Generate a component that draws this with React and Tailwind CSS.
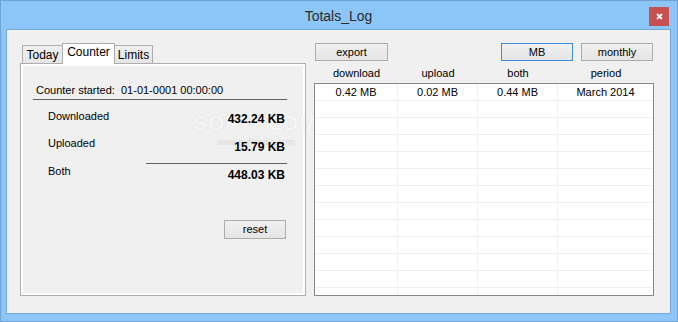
import React from 'react';

const font = { fontFamily: '"Liberation Sans", Arial, sans-serif' };

function WinButton({ children, className = '', active = false }) {
  return (
    <button
      type="button"
      className={`flex items-center justify-center border bg-linear-to-b from-[#f0f0f0] to-[#e5e5e5] text-[11px] leading-none text-black ${
        active ? 'border-[#3c8fe0]' : 'border-[#acacac]'
      } ${className}`}
    >
      {children}
    </button>
  );
}

function CounterPanel() {
  return (
    <div className="flex w-[286px] flex-col">
      <div className="flex h-[20px] items-end pl-[2px]">
        <div className="flex h-[18px] w-[41px] items-start justify-center border border-b-0 border-[#adadad] bg-linear-to-b from-[#f0f0f0] to-[#e5e5e5] pt-[2px] text-[12px] leading-[15px]">
          Today
        </div>
        <div className="relative z-10 -ml-px flex h-[21px] w-[53px] items-start justify-center self-start border border-b-0 border-[#adadad] bg-white pt-[1px] text-[12px] leading-[15px]">
          Counter
        </div>
        <div className="-ml-px flex h-[18px] w-[39px] items-start justify-center border border-b-0 border-[#adadad] bg-linear-to-b from-[#f0f0f0] to-[#e5e5e5] pt-[2px] text-[12px] leading-[15px]">
          Limits
        </div>
      </div>
      <div className="h-[233px] border border-[#adadad]">
        <div className="flex h-full flex-col border-2 border-white bg-[#f0f0f0]">
          <div className="ml-[13px] mt-[17px] text-[11px] leading-[14px]">
            Counter started:&nbsp; 01-01-0001 00:00:00
          </div>
          <div className="ml-[10px] mt-[2px] h-px w-[254px] bg-[#646464]" />

          <div className="mt-[9px] flex justify-between pl-[25px] pr-[18px]">
            <span className="text-[11px] leading-[14px]">Downloaded</span>
            <span className="relative z-10 pt-[3px] text-[12px] font-bold leading-[14px]">432.24 KB</span>
          </div>
          <div className="mt-[10px] flex justify-between pl-[25px] pr-[18px]">
            <span className="text-[11px] leading-[14px]">Uploaded</span>
            <span className="relative z-10 pt-[4px] text-[12px] font-bold leading-[14px]">15.79 KB</span>
          </div>
          <div className="relative z-10 ml-[123px] mt-[9px] h-px w-[141px] bg-[#646464]" />
          <div className="flex justify-between pl-[25px] pr-[18px]">
            <span className="text-[11px] leading-[14px]">Both</span>
            <span className="relative z-10 pt-[4px] text-[12px] font-bold leading-[14px]">448.03 KB</span>
          </div>

          <div className="mr-[17px] mt-[38px] flex justify-end">
            <WinButton className="h-[19px] w-[62px]">reset</WinButton>
          </div>
        </div>
      </div>
    </div>
  );
}

const rows = [
  { download: '0.42 MB', upload: '0.02 MB', both: '0.44 MB', period: 'March 2014' },
  ...Array.from({ length: 12 }, () => ({ download: '', upload: '', both: '', period: '' })),
];

function LogTable() {
  return (
    <div className="relative z-10 flex w-[340px] flex-col">
      <div className="flex h-[18px] items-stretch pl-px">
        <WinButton className="w-[73px]">export</WinButton>
        <div className="flex-1" />
        <WinButton active className="w-[72px]">MB</WinButton>
        <WinButton className="ml-[8px] mr-px w-[72px]">monthly</WinButton>
      </div>
      <div className="mt-[5px] flex pl-px text-[11px] leading-[14px]">
        <div className="w-[83px] text-center">download</div>
        <div className="w-[80px] text-center">upload</div>
        <div className="w-[80px] text-center">both</div>
        <div className="flex-1 text-center">period</div>
      </div>
      <div className="mt-[3px] h-[213px] overflow-hidden border border-[#828790] bg-white">
        {rows.map((r, i) => (
          <div key={i} className="flex h-[17px] border-b border-[#f0f0f0] text-[11px] leading-[16px]">
            <div className="w-[83px] border-r border-[#f0f0f0] text-center">{r.download}</div>
            <div className="w-[80px] border-r border-[#f0f0f0] text-center">{r.upload}</div>
            <div className="w-[80px] border-r border-[#f0f0f0] text-center">{r.both}</div>
            <div className="flex-1 text-center">{r.period}</div>
          </div>
        ))}
      </div>
    </div>
  );
}

export default function App() {
  return (
    <div className="h-[322px] w-[678px] bg-[#8cc6f8] text-black" style={font}>
      <div className="flex h-full flex-col border border-[#6ea3d6] pb-[7px] pl-[5px] pr-[6px]">
        <div className="grid h-[28px] grid-cols-[1fr_auto_1fr] items-center">
          <div />
          <div className="pt-[2px] text-[14px] text-[#2b2b2b]">Totals_Log</div>
          <div className="flex justify-end pr-[2px]">
            <div className="mt-[3px] flex h-[19px] w-[20px] items-center justify-center bg-[#c75050]">
              <svg width="7" height="7" viewBox="0 0 7 7">
                <path d="M1 1 L6 6 M6 1 L1 6" stroke="white" strokeWidth="1.8" />
              </svg>
            </div>
          </div>
        </div>
        <div className="relative flex flex-1 border border-[#78a6d4] bg-[#f0f0f0] pl-[13px] pt-[13px]">
          <CounterPanel />
          <div className="ml-[8px]">
            <LogTable />
          </div>
          <div className="pointer-events-none absolute left-[186px] top-[77px] select-none text-[21px] font-bold tracking-[1px] text-[#f8f8f8] opacity-80 [text-shadow:0_0_1px_#d4d4d4]">
            SOFTPEDIA
            <span className="align-top text-[7px]">™</span>
          </div>
          <div className="pointer-events-none absolute left-[210px] top-[106px] select-none text-[9px] text-[#dadada]">
            www.softpedia.com
          </div>
        </div>
      </div>
    </div>
  );
}
